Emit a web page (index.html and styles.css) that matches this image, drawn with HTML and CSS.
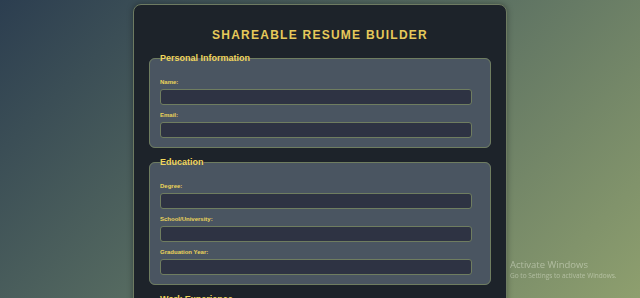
FILE: index.html
```html
<!DOCTYPE html>
<html lang="en">
<head>
<meta charset="utf-8">
<title>Shareable Resume Builder</title>
<link rel="stylesheet" href="styles.css">
</head>
<body>
<div class="card">
  <h1 class="title">Shareable Resume Builder</h1>
  <form class="form">
    <fieldset class="group">
      <legend class="group-title">Personal Information</legend>
      <label class="field-label">Name:</label>
      <input class="field-input" type="text">
      <label class="field-label">Email:</label>
      <input class="field-input" type="text">
    </fieldset>
    <fieldset class="group">
      <legend class="group-title">Education</legend>
      <label class="field-label">Degree:</label>
      <input class="field-input" type="text">
      <label class="field-label">School/University:</label>
      <input class="field-input" type="text">
      <label class="field-label">Graduation Year:</label>
      <input class="field-input" type="text">
    </fieldset>
    <fieldset class="group">
      <legend class="group-title">Work Experience</legend>
      <label class="field-label">Company:</label>
      <input class="field-input" type="text">
    </fieldset>
  </form>
</div>
<div class="watermark">
  <div class="wm-title">Activate Windows</div>
  <div class="wm-sub">Go to Settings to activate Windows.</div>
</div>
</body>
</html>
```
FILE: styles.css
```css
html, body {
  margin: 0;
  height: 100%;
  overflow: hidden;
}
body {
  background: linear-gradient(135deg, #2c3e50 0%, #5a6f62 50%, #8e9f6e 100%);
  font-family: "Liberation Sans", Arial, sans-serif;
}
.card {
  width: 342px;
  margin: 4px auto 0;
  padding: 23px 15px 20px;
  background: #1d232a;
  border: 1px solid #6e7b62;
  border-radius: 8px;
  box-shadow: 0 0 6px rgba(0, 0, 0, 0.35);
}
.title {
  margin: 0 0 10px;
  text-align: center;
  text-transform: uppercase;
  font-size: 12px;
  line-height: 15px;
  letter-spacing: 1.25px;
  font-weight: bold;
  color: #e6c95a;
}
.form {
  margin: 0;
}
.group {
  margin: 0 0 9px;
  padding: 16px 18px 9px 10px;
  background: #4a5561;
  border: 1px solid #6f7d60;
  border-radius: 6px;
  min-inline-size: 0;
}
.group-title {
  padding: 0;
  font-size: 9px;
  line-height: 10px;
  font-weight: bold;
  color: #f0d65c;
}
.field-label {
  display: block;
  font-size: 6px;
  line-height: 7px;
  font-weight: bold;
  color: #ebd35a;
}
.field-input {
  display: block;
  box-sizing: border-box;
  width: 100%;
  height: 16px;
  margin: 3px 0 7px;
  padding: 0 4px;
  background: #2e3343;
  border: 1px solid #6f7d60;
  border-radius: 3px;
  color: #ffffff;
}
.field-input:last-child {
  margin-bottom: 0;
}
.watermark {
  position: fixed;
  left: 510px;
  top: 259px;
  font-family: "Open Sans", "Noto Sans", sans-serif;
  color: rgba(235, 240, 225, 0.45);
}
.wm-title {
  font-size: 9.5px;
  line-height: 12px;
}
.wm-sub {
  font-size: 6.5px;
  line-height: 9px;
}
```
